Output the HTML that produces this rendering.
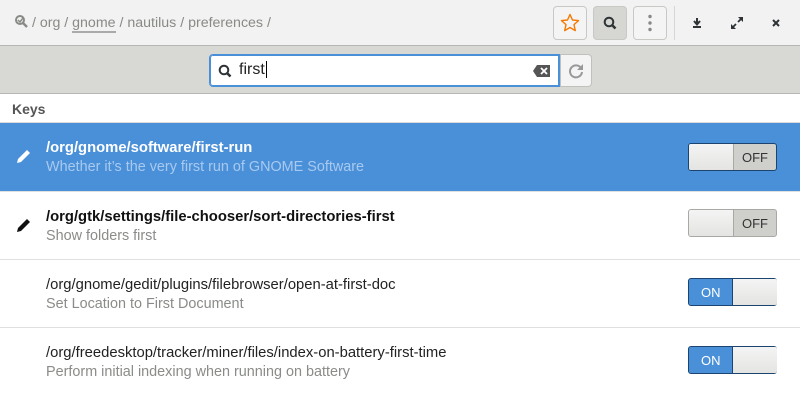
<!DOCTYPE html>
<html><head><style>
*{margin:0;padding:0;box-sizing:border-box}
body{width:800px;height:412px;background:#fff;font-family:"Liberation Sans",sans-serif;position:relative;overflow:hidden}
.hdr{position:absolute;left:0;top:0;width:800px;height:46px;background:#f2f2f2;border-bottom:1px solid #b6b6b3}
.path{position:absolute;left:14px;top:14px;font-size:14.2px;color:#888a85}
.btn{position:absolute;top:6px;width:34px;height:34px;border:1px solid #c8c8c4;border-radius:4px;background:#f4f4f4}
.sb{position:absolute;left:0;top:46px;width:800px;height:48px;background:#d8d8d5;border-bottom:1px solid #b6b6b3}
.entry{position:absolute;left:209px;top:54px;width:351px;height:33px;border:1px solid #4a90d9;border-radius:4px 0 0 4px;background:#fff;box-shadow:inset 0 0 0 1px #4a90d9}
.keys{position:absolute;left:12px;top:101px;font-size:14px;font-weight:bold;color:#555}
.row{position:absolute;left:0;width:800px;height:68px;border-top:1px solid #e0e0e0}
.t{position:absolute;left:46px;top:17px;font-size:14.8px;color:#222;white-space:nowrap}
.s{position:absolute;left:46px;top:36px;font-size:14.4px;color:#8a8c88;white-space:nowrap}
.sw{position:absolute;left:688px;width:89px;height:28px;border:1px solid #a8a8a4;border-radius:3px;background:#cfcfcc;font-size:13px}
.sw .k{position:absolute;top:0;width:45px;height:26px;background:linear-gradient(#f4f4f4,#e4e4e2);border:0 solid #a8a8a4}
</style></head><body>
<div class="hdr">
<div class="path"><svg width="14" height="14" viewBox="0 0 14 14" style="vertical-align:-1px"><circle cx="6" cy="6" r="4" fill="none" stroke="#888a85" stroke-width="2"/><path d="M9 9l4 4" stroke="#888a85" stroke-width="2.4"/><path d="M4 6l2 2 3-4" stroke="#888a85" stroke-width="1.5" fill="none"/></svg> / org / <span style="border-bottom:2px solid #aaa">gnome</span> / nautilus / preferences /</div>
<div class="btn" style="left:553px"><svg width="32" height="32" viewBox="0 0 32 32"><path d="M16 7.5l2.5 5.5 6 .6-4.5 4 1.3 6L16 20.5l-5.3 3.1 1.3-6-4.5-4 6-.6z" fill="none" stroke="#f57900" stroke-width="1.4" stroke-linejoin="round"/></svg></div>
<div class="btn" style="left:593px;background:#d6d6d3"><svg width="32" height="32" viewBox="0 0 32 32"><circle cx="15" cy="15" r="4.3" fill="none" stroke="#2e3436" stroke-width="2"/><path d="M18 18l3.5 3.5" stroke="#2e3436" stroke-width="2.6"/></svg></div>
<div class="btn" style="left:633px"><svg width="32" height="32" viewBox="0 0 32 32"><circle cx="16" cy="9.5" r="1.7" fill="#888"/><circle cx="16" cy="16" r="1.7" fill="#888"/><circle cx="16" cy="22.5" r="1.7" fill="#888"/></svg></div>
<div style="position:absolute;left:674px;top:6px;width:1px;height:34px;background:#d6d6d3"></div>
<svg style="position:absolute;left:689px;top:15px" width="16" height="16" viewBox="0 0 16 16"><path d="M8 3v6M5 6l3 3.5L11 6" stroke="#2e3436" stroke-width="2" fill="none"/><rect x="4" y="11" width="8" height="2" fill="#2e3436"/></svg>
<svg style="position:absolute;left:729px;top:15px" width="16" height="16" viewBox="0 0 16 16"><path d="M3 13l4-4M13 3l-4 4" stroke="#2e3436" stroke-width="1.8"/><path d="M2 9v5h5zM14 7V2H9z" fill="#2e3436"/></svg>
<svg style="position:absolute;left:768px;top:15px" width="16" height="16" viewBox="0 0 16 16"><path d="M5 5l6 6M11 5l-6 6" stroke="#2e3436" stroke-width="2"/></svg>
</div>
<div class="sb">
<div class="entry" style="top:8px">
<svg style="position:absolute;left:7px;top:8px" width="16" height="16" viewBox="0 0 16 16"><circle cx="7" cy="7" r="4.3" fill="none" stroke="#2e3436" stroke-width="2"/><path d="M10 10l3.5 3.5" stroke="#2e3436" stroke-width="2.6"/></svg>
<span style="position:absolute;left:29px;top:6px;font-size:16px;color:#222">first<span style="border-left:1px solid #000;margin-left:1px"></span></span>
<svg style="position:absolute;right:8px;top:9px" width="18" height="14" viewBox="0 0 18 14"><path d="M4 1h13v12H4L0 7z" fill="#555"/><path d="M8 4l6 6M14 4l-6 6" stroke="#fff" stroke-width="1.8"/></svg>
</div>
<div style="position:absolute;left:560px;top:8px;width:32px;height:33px;border:1px solid #c0c0bc;border-radius:0 4px 4px 0;background:#f4f4f4"><svg width="30" height="31" viewBox="0 0 30 31"><path d="M20 13a6 6 0 1 0 1 4" fill="none" stroke="#999" stroke-width="2"/><path d="M22 9v6h-6z" fill="#999"/></svg></div>
</div>
<div class="keys">Keys</div>
<div class="row" style="top:122px;height:69px;background:#4a90d9;border-top:1px solid #dcdcdc">
<svg style="position:absolute;left:15px;top:24px" width="18" height="18" viewBox="0 0 18 18"><path d="M2 16l1-4 9-9 3 3-9 9z" fill="#fff"/></svg>
<div class="t" style="color:#fff;font-weight:bold">/org/gnome/software/first-run</div>
<div class="s" style="color:#a8c9ef">Whether it’s the very first run of GNOME Software</div>
<div class="sw" style="top:20px;border-color:#1c4470"><div class="k" style="left:0;border-right-width:1px;border-radius:2px 0 0 2px"></div><span style="position:absolute;left:53px;top:6px;color:#333">OFF</span></div>
</div>
<div class="row" style="top:191px">
<svg style="position:absolute;left:15px;top:24px" width="18" height="18" viewBox="0 0 18 18"><path d="M2 16l1-4 9-9 3 3-9 9z" fill="#111"/></svg>
<div class="t" style="font-weight:bold;color:#111">/org/gtk/settings/file-chooser/sort-directories-first</div>
<div class="s">Show folders first</div>
<div class="sw" style="top:17px"><div class="k" style="left:0;border-right-width:1px;border-radius:2px 0 0 2px"></div><span style="position:absolute;left:53px;top:6px;color:#333">OFF</span></div>
</div>
<div class="row" style="top:259px">
<div class="t">/org/gnome/gedit/plugins/filebrowser/open-at-first-doc</div>
<div class="s">Set Location to First Document</div>
<div class="sw" style="top:18px;background:#4a90d9;border-color:#1c4470"><span style="position:absolute;left:12px;top:6px;color:#fff">ON</span><div class="k" style="left:43px;border-left-width:1px;border-color:#1c4470;border-radius:0 2px 2px 0"></div></div>
</div>
<div class="row" style="top:327px">
<div class="t">/org/freedesktop/tracker/miner/files/index-on-battery-first-time</div>
<div class="s">Perform initial indexing when running on battery</div>
<div class="sw" style="top:18px;background:#4a90d9;border-color:#1c4470"><span style="position:absolute;left:12px;top:6px;color:#fff">ON</span><div class="k" style="left:43px;border-left-width:1px;border-color:#1c4470;border-radius:0 2px 2px 0"></div></div>
</div>
</body></html>
